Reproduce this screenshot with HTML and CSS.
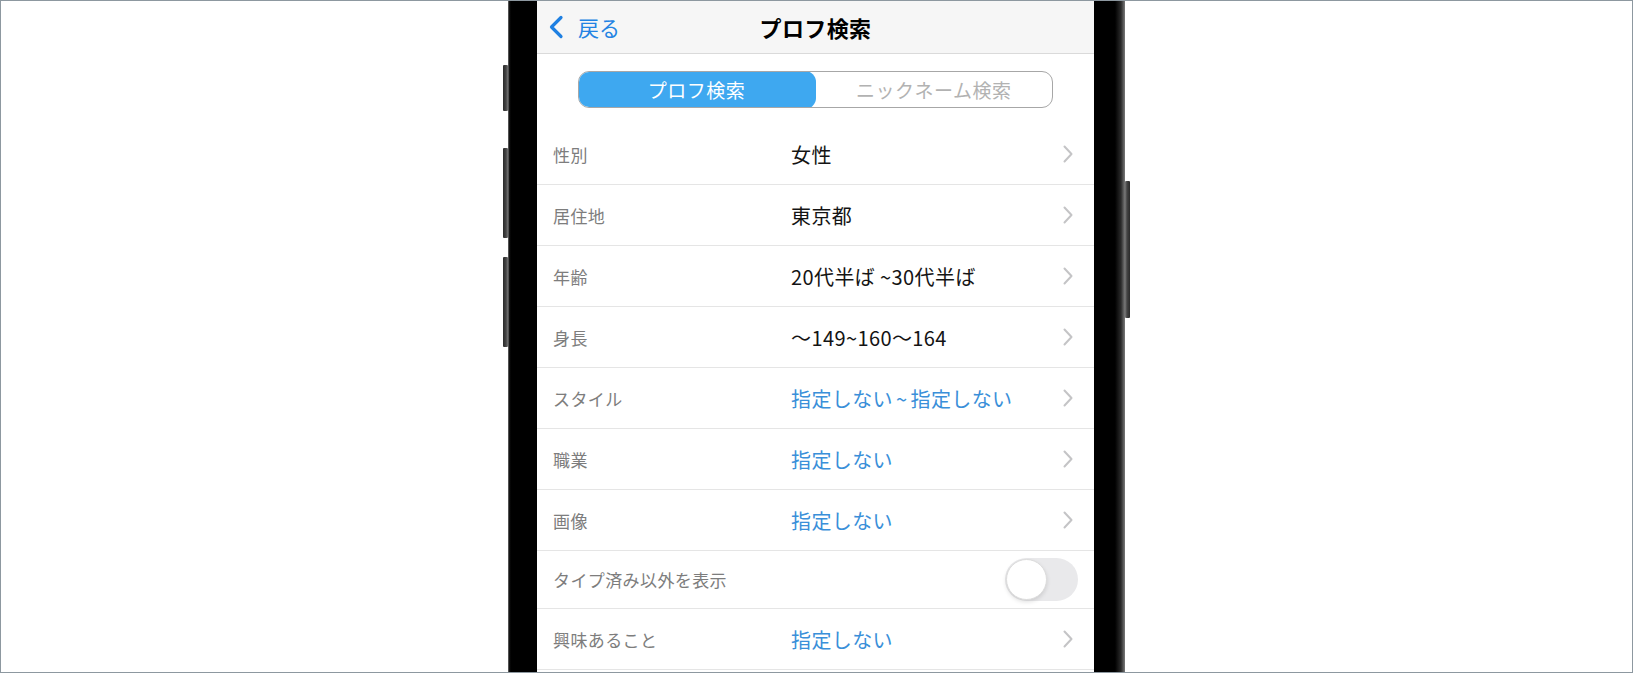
FILE: index.html
```html
<!DOCTYPE html>
<html lang="ja">
<head>
<meta charset="utf-8">
<title>プロフ検索</title>
<link rel="stylesheet" href="styles.css">
</head>
<body>
<div class="frame">
  <div class="phone">
    <span class="hw hw-l1"></span>
    <span class="hw hw-l2"></span>
    <span class="hw hw-l3"></span>
    <span class="hw hw-r1"></span>
    <div class="screen">
      <header class="nav">
        <a class="back">
          <svg class="back-icon" width="16" height="24" viewBox="0 0 16 24"><path d="M13 2.5 L3.5 12 L13 21.5" fill="none" stroke="#1f80e2" stroke-width="3.2" stroke-linecap="round" stroke-linejoin="round"/></svg>
          <span>戻る</span>
        </a>
        <h1 class="title">プロフ検索</h1>
        <span></span>
      </header>
      <div class="seg-wrap">
        <div class="seg">
          <span class="seg-item active">プロフ検索</span>
          <span class="seg-item">ニックネーム検索</span>
        </div>
      </div>
      <ul class="list">
        <li class="row"><span class="label">性別</span><span class="value">女性</span><svg class="chev" width="12" height="20" viewBox="0 0 12 20"><path d="M2.5 2.5 L9.5 10 L2.5 17.5" fill="none" stroke="#c4c4c6" stroke-width="2" stroke-linecap="round" stroke-linejoin="round"/></svg></li>
        <li class="row"><span class="label">居住地</span><span class="value">東京都</span><svg class="chev" width="12" height="20" viewBox="0 0 12 20"><path d="M2.5 2.5 L9.5 10 L2.5 17.5" fill="none" stroke="#c4c4c6" stroke-width="2" stroke-linecap="round" stroke-linejoin="round"/></svg></li>
        <li class="row"><span class="label">年齢</span><span class="value">20代半ば ~30代半ば</span><svg class="chev" width="12" height="20" viewBox="0 0 12 20"><path d="M2.5 2.5 L9.5 10 L2.5 17.5" fill="none" stroke="#c4c4c6" stroke-width="2" stroke-linecap="round" stroke-linejoin="round"/></svg></li>
        <li class="row"><span class="label">身長</span><span class="value">～149~160～164</span><svg class="chev" width="12" height="20" viewBox="0 0 12 20"><path d="M2.5 2.5 L9.5 10 L2.5 17.5" fill="none" stroke="#c4c4c6" stroke-width="2" stroke-linecap="round" stroke-linejoin="round"/></svg></li>
        <li class="row"><span class="label">スタイル</span><span class="value blue">指定しない<span class="tilde">~</span>指定しない</span><svg class="chev" width="12" height="20" viewBox="0 0 12 20"><path d="M2.5 2.5 L9.5 10 L2.5 17.5" fill="none" stroke="#c4c4c6" stroke-width="2" stroke-linecap="round" stroke-linejoin="round"/></svg></li>
        <li class="row"><span class="label">職業</span><span class="value blue">指定しない</span><svg class="chev" width="12" height="20" viewBox="0 0 12 20"><path d="M2.5 2.5 L9.5 10 L2.5 17.5" fill="none" stroke="#c4c4c6" stroke-width="2" stroke-linecap="round" stroke-linejoin="round"/></svg></li>
        <li class="row"><span class="label">画像</span><span class="value blue">指定しない</span><svg class="chev" width="12" height="20" viewBox="0 0 12 20"><path d="M2.5 2.5 L9.5 10 L2.5 17.5" fill="none" stroke="#c4c4c6" stroke-width="2" stroke-linecap="round" stroke-linejoin="round"/></svg></li>
        <li class="row row-toggle"><span class="label">タイプ済み以外を表示</span><span class="toggle"><span class="knob"></span></span></li>
        <li class="row"><span class="label">興味あること</span><span class="value blue">指定しない</span><svg class="chev" width="12" height="20" viewBox="0 0 12 20"><path d="M2.5 2.5 L9.5 10 L2.5 17.5" fill="none" stroke="#c4c4c6" stroke-width="2" stroke-linecap="round" stroke-linejoin="round"/></svg></li>
      </ul>
    </div>
  </div>
</div>
</body>
</html>
```

FILE: styles.css
```css
* { box-sizing: border-box; }

html, body {
  margin: 0;
  padding: 0;
  background: #ffffff;
}

body {
  font-family: "Noto Sans CJK JP", "Noto Sans", sans-serif;
  width: 1633px;
  height: 673px;
  overflow: hidden;
}

.frame {
  width: 1633px;
  height: 673px;
  border: 1px solid #8d98a0;
  overflow: hidden;
  display: flex;
  justify-content: center;
  background: #ffffff;
}

.phone {
  position: relative;
  width: 617px;
  height: 760px;
  flex: none;
  padding: 0 31px 0 29px;
  background: linear-gradient(to right, #8a8a8a 0, #1a1a1a 1px, #000 3px, #000 calc(100% - 10px), #2b2b2b calc(100% - 4px), #7a7a7a 100%);
}

.hw {
  position: absolute;
  width: 5px;
  background: linear-gradient(to right, #2a2a2a, #444 60%, #777);
  border-radius: 1px;
}
.hw-l1 { left: -5px; top: 64px; height: 46px; }
.hw-l2 { left: -5px; top: 147px; height: 90px; }
.hw-l3 { left: -5px; top: 256px; height: 90px; }
.hw-r1 {
  right: -5px;
  top: 180px;
  height: 137px;
  background: linear-gradient(to right, #777, #444 40%, #2a2a2a);
}

.screen {
  width: 557px;
  height: 100%;
  background: #ffffff;
}

/* nav bar */
.nav {
  height: 53px;
  background: #f6f6f6;
  border-bottom: 1px solid #dadada;
  display: grid;
  grid-template-columns: 1fr auto 1fr;
  align-items: center;
}

.back {
  display: flex;
  align-items: center;
  gap: 14px;
  padding-left: 11px;
  color: #2383e3;
  font-size: 21px;
  line-height: 1;
}
.back-icon { display: block; }

.title {
  margin: 0;
  font-size: 22px;
  font-weight: 700;
  color: #000;
  line-height: 1;
  letter-spacing: 0.4px;
}

/* segmented control */
.seg-wrap {
  padding: 17px 0 16px;
  display: flex;
  justify-content: center;
}

.seg {
  width: 475px;
  height: 37px;
  border: 1.5px solid #a7a7a7;
  border-radius: 11px;
  display: grid;
  grid-template-columns: 1fr 1fr;
  overflow: hidden;
}

.seg-item {
  display: flex;
  align-items: center;
  justify-content: center;
  font-size: 19px;
  color: #b2b2b2;
  letter-spacing: 0.5px;
}

.seg-item.active {
  background: #3ea8f0;
  color: #ffffff;
  margin: -1.5px 0 -1.5px -1.5px;
  border-radius: 11px;
}

/* list */
.list {
  list-style: none;
  margin: 0;
  padding: 0;
}

.row {
  height: 61px;
  border-bottom: 1px solid #e5e5e5;
  display: grid;
  grid-template-columns: 238px 1fr auto;
  align-items: center;
  padding: 0 20px 0 16px;
}

.row-toggle {
  height: 58px;
  padding-right: 16px;
}

.label {
  font-size: 17px;
  color: #7d7d7d;
  letter-spacing: 0.4px;
}

.value {
  font-size: 20px;
  color: #141414;
  letter-spacing: 0.4px;
}

.value.blue {
  color: #3a8fd9;
}

.tilde {
  margin: 0 3px;
}

.chev { display: block; }

.toggle {
  grid-column: 3;
  width: 73px;
  height: 43px;
  border-radius: 22px;
  background: #e9e9eb;
  padding: 1px;
  display: flex;
}

.knob {
  width: 41px;
  height: 41px;
  border-radius: 50%;
  background: #ffffff;
  border: 1px solid #dcdcdc;
  box-shadow: 0 2px 4px rgba(0, 0, 0, 0.12);
}
```
